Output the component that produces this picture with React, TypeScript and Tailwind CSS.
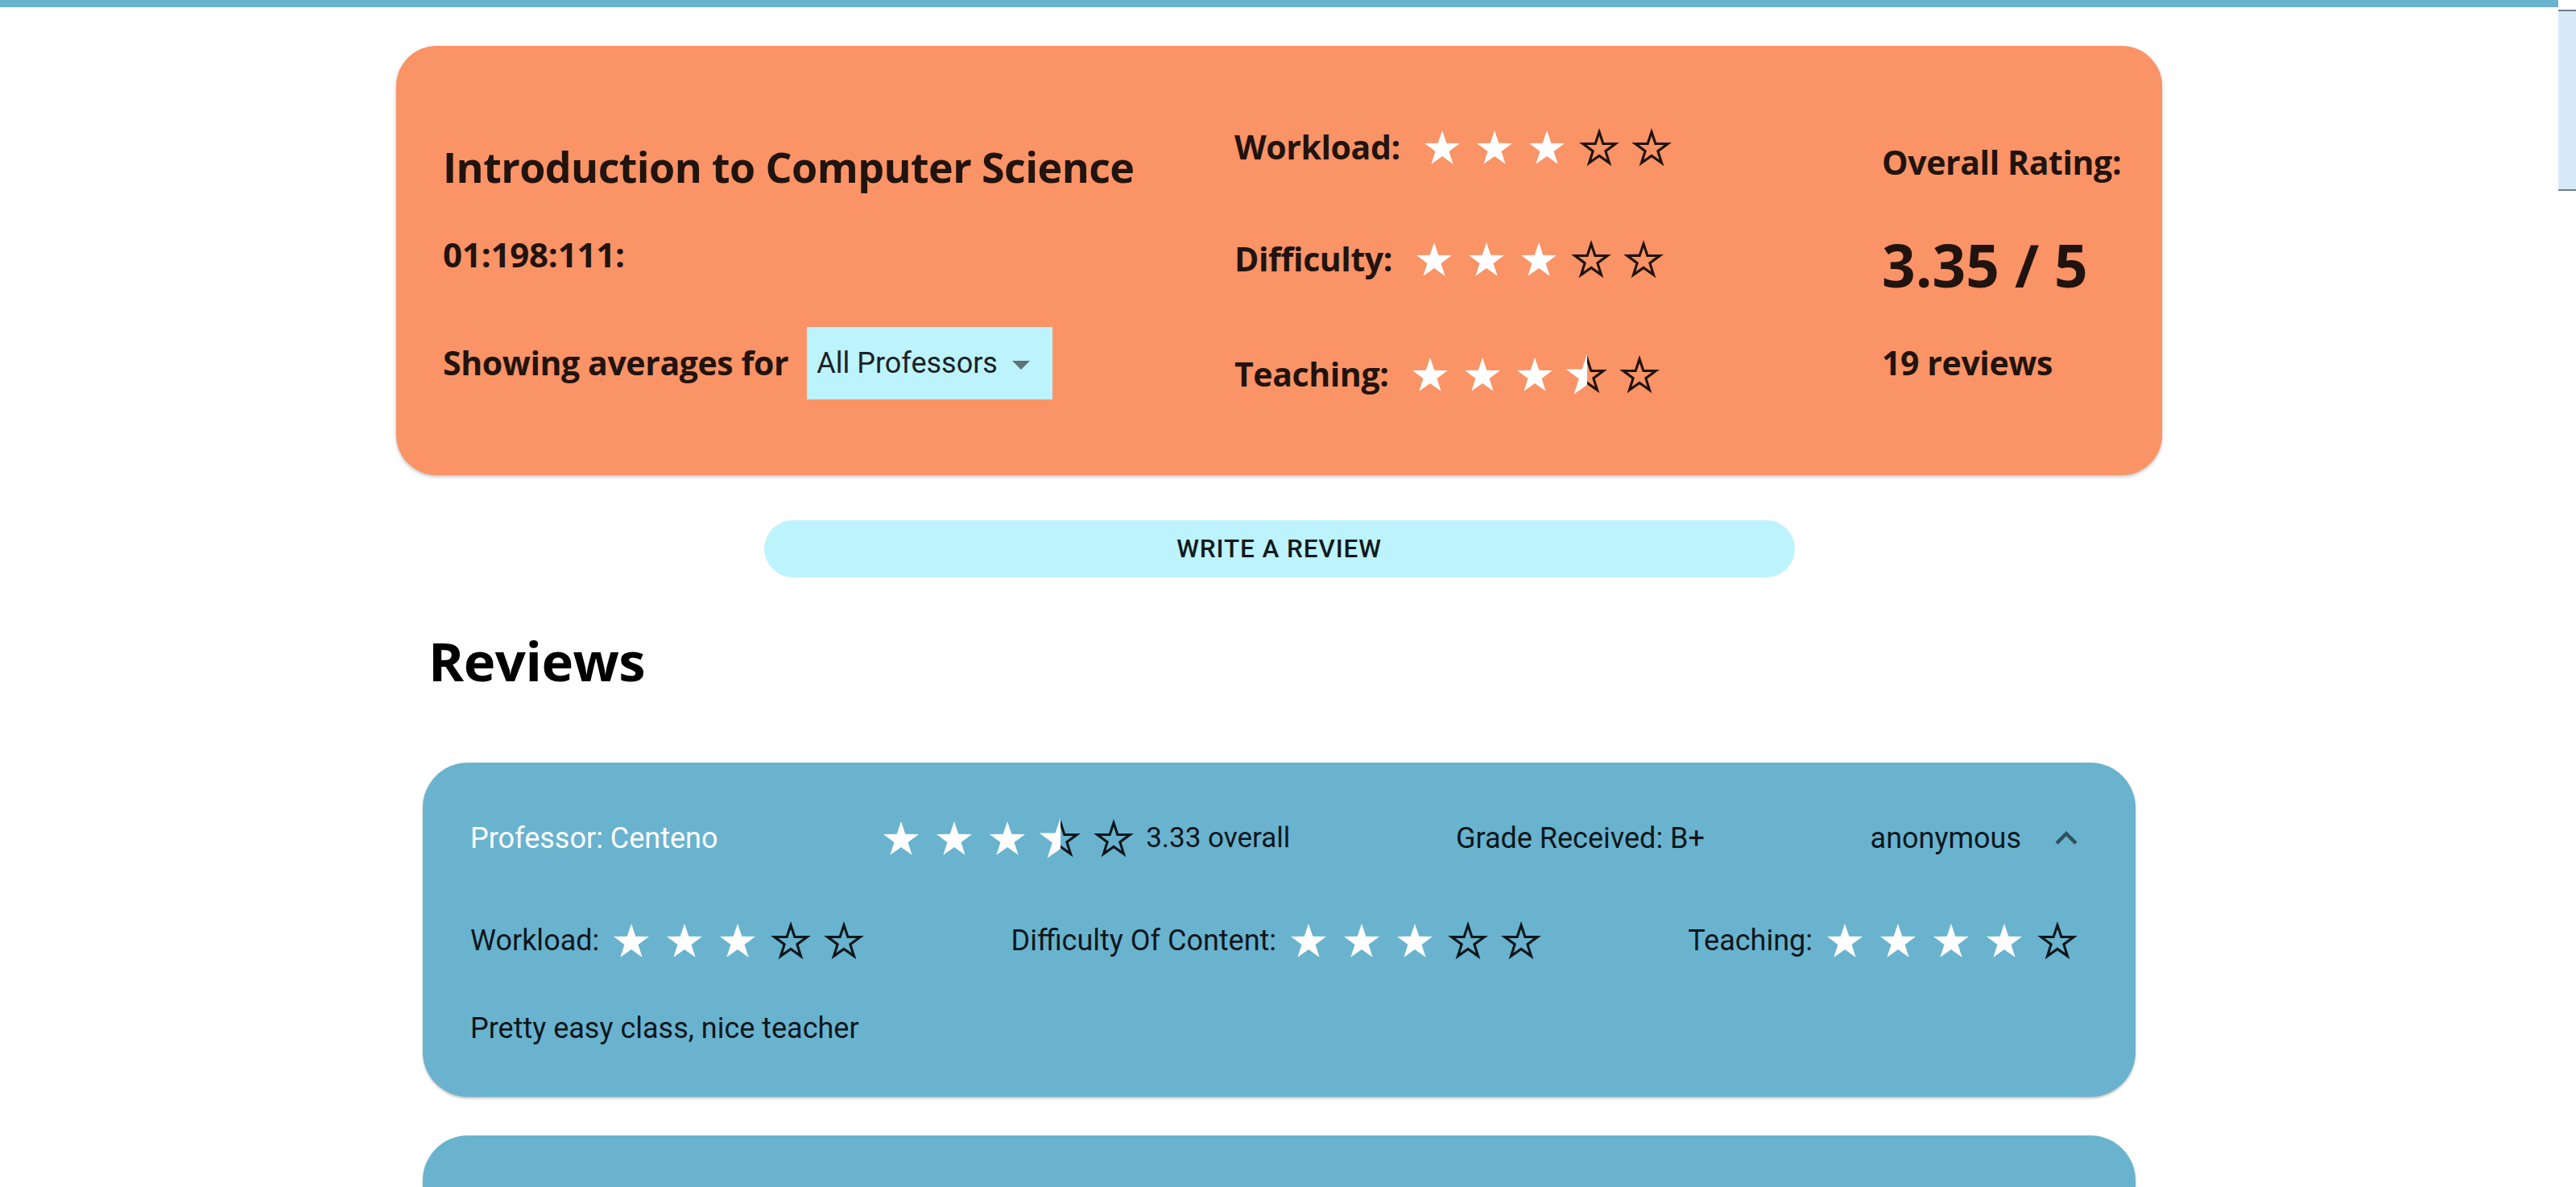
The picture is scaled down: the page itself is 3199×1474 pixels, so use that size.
import React, { useId } from "react";

// regular five-point star, 44 x 42 box
const STAR_POINTS =
  "22,0 27.29,15.82 43.97,15.96 30.56,25.88 35.58,41.79 22,32.1 8.42,41.79 13.44,25.88 0.03,15.96 16.71,15.82";

type StarKind = "full" | "half" | "empty";

function Star({ kind }: { kind: StarKind }) {
  const clipId = useId();
  return (
    <svg width="44" height="42" viewBox="0 0 44 42" className="shrink-0 overflow-visible">
      {kind === "full" && <polygon points={STAR_POINTS} fill="#ffffff" />}
      {kind !== "full" && (
        <polygon
          points={STAR_POINTS}
          transform="translate(22 23) scale(0.92) translate(-22 -23)"
          fill="none"
          stroke="currentColor"
          strokeWidth="3.4"
          strokeLinejoin="miter"
        />
      )}
      {kind === "half" && (
        <>
          <defs>
            <clipPath id={clipId}>
              <rect x="-4" y="-4" width="26" height="50" />
            </clipPath>
          </defs>
          <polygon points={STAR_POINTS} fill="#ffffff" stroke="#ffffff" strokeWidth="3" clipPath={`url(#${clipId})`} />
        </>
      )}
    </svg>
  );
}

// ratings are shown to the nearest half star
function Stars({ value, gap }: { value: number; gap: string }) {
  const rounded = Math.round(value * 2) / 2;
  const kinds: StarKind[] = [1, 2, 3, 4, 5].map((n) =>
    rounded >= n ? "full" : rounded >= n - 0.5 ? "half" : "empty"
  );
  return (
    <div className={`flex items-center ${gap}`}>
      {kinds.map((k, i) => (
        <Star key={i} kind={k} />
      ))}
    </div>
  );
}

function HeaderRating({ label, value }: { label: string; value: number }) {
  return (
    <div className="flex items-center">
      <span className="text-[41px] font-bold tracking-[-0.4px]">{label}</span>
      <div className="ml-[30px]">
        <Stars value={value} gap="gap-[21px]" />
      </div>
    </div>
  );
}

function ExpandLess() {
  return (
    <svg width="54" height="54" viewBox="0 0 24 24" className="text-black/55" fill="currentColor">
      <path d="M12 8l-6 6 1.41 1.41L12 10.83l4.59 4.58L18 14z" />
    </svg>
  );
}

interface Review {
  professor: string;
  overall: number;
  grade: string;
  author: string;
  workload: number;
  difficulty: number;
  teaching: number;
  text: string;
}

const reviews: Review[] = [
  {
    professor: "Centeno",
    overall: 3.33,
    grade: "B+",
    author: "anonymous",
    workload: 3,
    difficulty: 3,
    teaching: 4,
    text: "Pretty easy class, nice teacher",
  },
];

function ReviewCard({ review }: { review: Review }) {
  return (
    <div className="h-[415px] w-full shrink-0 rounded-[56px] bg-[#69b3cf] px-[59px] pt-[67px] text-[#0e171b] shadow-[0_2px_3px_rgba(0,0,0,0.25)]">
      <div className="flex h-[54px] items-center justify-between">
        <span className="text-[36px] text-white">Professor: {review.professor}</span>
        <div className="flex items-center">
          <Stars value={review.overall} gap="gap-[22px]" />
          <span className="ml-[18px] text-[35px]">{review.overall.toFixed(2)} overall</span>
        </div>
        <span className="text-[36px]">Grade Received: {review.grade}</span>
        <div className="flex items-center">
          <span className="text-[36px]">{review.author}</span>
          <div className="ml-[29px]">
            <ExpandLess />
          </div>
        </div>
      </div>

      <div className="mt-[73px] flex h-[54px] items-center justify-between pr-[16px]">
        <div className="flex items-center">
          <span className="mr-[18px] text-[36px]">Workload:</span>
          <Stars value={review.workload} gap="gap-[22px]" />
        </div>
        <div className="flex items-center">
          <span className="mr-[18px] text-[36px]">Difficulty Of Content:</span>
          <Stars value={review.difficulty} gap="gap-[22px]" />
        </div>
        <div className="flex items-center">
          <span className="mr-[18px] text-[36px]">Teaching:</span>
          <Stars value={review.teaching} gap="gap-[22px]" />
        </div>
      </div>

      <p className="mt-[55px] flex h-[54px] items-center text-[36px]">{review.text}</p>
    </div>
  );
}

export default function App() {
  return (
    <div className="flex h-screen w-full overflow-hidden bg-white">
      <main className="min-w-0 flex-1 overflow-hidden">
        <div className="h-[9px] w-full bg-[#69b3cf]" />

        {/* Course summary */}
        <div className="mx-auto mt-[48px] grid h-[533px] w-[2193px] grid-cols-[983px_804px_1fr] rounded-[50px] bg-[#fa9366] pl-[58px] font-['Open_Sans',sans-serif] text-[#21130d] shadow-[0_2px_4px_rgba(0,0,0,0.25)]">
          <div className="flex flex-col pt-[110px]">
            <div className="flex h-[80px] items-center">
              <h2 className="text-[52px] font-bold tracking-[-0.6px]">Introduction to Computer Science</h2>
            </div>
            <div className="mt-[28px] flex h-[80px] items-center">
              <span className="text-[42px] font-bold tracking-[-0.2px]">01:198:111:</span>
            </div>
            <div className="mt-[51px] flex h-[90px] items-center">
              <span className="text-[41px] font-bold tracking-[-0.4px]">Showing averages for</span>
              <div className="ml-[23px] flex h-[90px] w-[305px] items-center bg-[#bdf3fd] pl-[12px] font-['Roboto',sans-serif] text-[36px] text-[#1a2224]">
                <span>All Professors</span>
                <svg width="22" height="11" viewBox="0 0 22 11" className="ml-[18px] mt-[5px]">
                  <path d="M0 0h22L11 11z" fill="#5d7378" />
                </svg>
              </div>
            </div>
          </div>

          <div className="flex flex-col pt-[86px]">
            <div className="flex h-[80px] items-center">
              <HeaderRating label="Workload:" value={3} />
            </div>
            <div className="mt-[59px] flex h-[80px] items-center">
              <HeaderRating label="Difficulty:" value={3} />
            </div>
            <div className="mt-[63px] flex h-[80px] items-center">
              <HeaderRating label="Teaching:" value={3.5} />
            </div>
          </div>

          <div className="flex flex-col pt-[105px]">
            <div className="flex h-[80px] items-center">
              <span className="text-[41px] font-bold tracking-[-0.4px]">Overall Rating:</span>
            </div>
            <div className="mt-[47px] flex h-[80px] items-center">
              <span className="text-[73px] font-bold">3.35 / 5</span>
            </div>
            <div className="mt-[42px] flex h-[80px] items-center">
              <span className="text-[41px] font-bold tracking-[-0.4px]">19 reviews</span>
            </div>
          </div>
        </div>

        <button className="mx-auto mt-[56px] flex h-[71px] w-[1280px] items-center justify-center rounded-full bg-[#bdf3fd] font-['Roboto',sans-serif] text-[31.5px] font-medium uppercase tracking-[0.9px] text-[#111a1c]">
          Write a review
        </button>

        {/* Reviews */}
        <section className="mx-auto w-[2127px] font-['Roboto',sans-serif]">
          <div className="mt-[53px] flex h-[100px] items-center pl-[7px]">
            <h1 className="font-['Open_Sans',sans-serif] text-[67px] font-bold tracking-[-0.5px] text-black">Reviews</h1>
          </div>
          <div className="mt-[77px] flex flex-col gap-[48px]">
            {reviews.map((r, i) => (
              <ReviewCard key={i} review={r} />
            ))}
            {/* next review card, still below the fold */}
            <div className="h-[415px] w-full shrink-0 rounded-[56px] bg-[#69b3cf] shadow-[0_2px_3px_rgba(0,0,0,0.25)]" />
          </div>
        </section>
      </main>

      {/* page scrollbar */}
      <div className="w-[22px] shrink-0 pt-[12px]">
        <div className="h-[225px] border-y-2 border-[#6f7f90] bg-[#d6e9f7]" />
      </div>
    </div>
  );
}
